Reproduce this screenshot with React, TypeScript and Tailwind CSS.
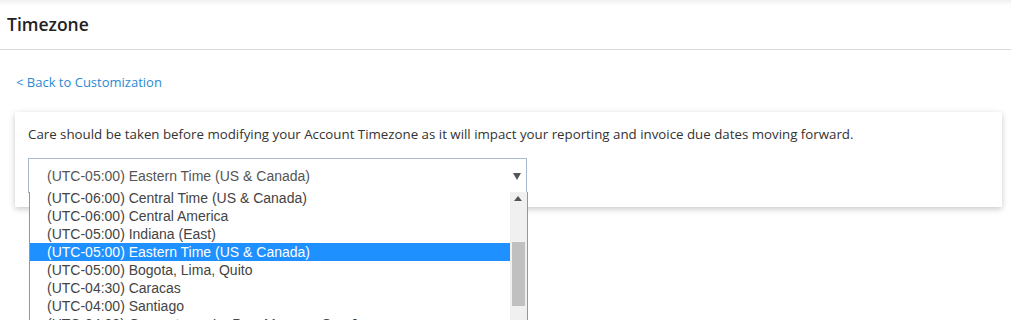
import React from "react";

const rows = [
  "(UTC-06:00) Central Time (US & Canada)",
  "(UTC-06:00) Central America",
  "(UTC-05:00) Indiana (East)",
  "(UTC-05:00) Eastern Time (US & Canada)",
  "(UTC-05:00) Bogota, Lima, Quito",
  "(UTC-04:30) Caracas",
  "(UTC-04:00) Santiago",
  "(UTC-04:00) Georgetown, La Paz, Manaus, San Juan",
];

export default function App() {
  return (
    <div className="w-[1011px] h-[320px] bg-white overflow-hidden font-['Open_Sans',sans-serif]">
      <div className="h-[50px] border-b border-[#d9d9d9] px-[7px] flex items-center shadow-[inset_0_5px_5px_-3px_rgba(0,0,0,0.08)]">
        <h1 className="text-[17.5px] font-semibold text-[#222] leading-none">Timezone</h1>
      </div>
      <div className="mt-[23px] pl-[16px] text-[13px] leading-[18px] text-[#2a8ad4]">
        &lt; Back to Customization
      </div>
      <div className="mt-[21px] ml-[15px] mr-[9px] bg-white shadow-[0_2px_6px_rgba(0,0,0,0.22)] pt-[13px] pb-[14px] px-[13px]">
        <p className="text-[13.3px] leading-[18px] text-[#333]">
          Care should be taken before modifying your Account Timezone as it will impact your reporting and invoice due dates moving forward.
        </p>
        <div className="relative mt-[15px] w-[499px] h-[35px] border border-[#a9b9cf] bg-white flex items-center pl-[18px] pt-[2px] font-['Liberation_Sans',Arial,sans-serif] text-[14px] text-[#555]">
          <span>(UTC-05:00) Eastern Time (US &amp; Canada)</span>
          <svg className="absolute right-[5px] top-[14px]" width="8" height="7" viewBox="0 0 8 7">
            <path d="M0 0H8L4 7Z" fill="#555" />
          </svg>
          <div className="absolute left-[0px] top-full w-[499px] h-[140px] border border-t-0 border-[#7f9db9] bg-white overflow-hidden z-10">
            <div className="relative h-full">
              <div className="mr-[17px] -mt-[3px]">
                {rows.map((r, i) => (
                  <div
                    key={r}
                    className={
                      i === 3
                        ? "h-[18px] leading-[18px] pl-[17px] whitespace-nowrap bg-[#1e90ff] text-white"
                        : "h-[18px] leading-[18px] pl-[17px] whitespace-nowrap text-[#444]"
                    }
                  >
                    {r}
                  </div>
                ))}
              </div>
              <div className="absolute right-0 top-0 bottom-0 w-[17px] bg-[#f0f0f0]">
                <svg className="absolute left-[4px] top-[7px]" width="8" height="5" viewBox="0 0 8 5">
                  <path d="M0 5H8L4 0Z" fill="#555" />
                </svg>
                <div className="absolute left-[2px] top-[53px] w-[13px] h-[64px] bg-[#c0c0c0]" />
              </div>
            </div>
          </div>
        </div>
      </div>
    </div>
  );
}
